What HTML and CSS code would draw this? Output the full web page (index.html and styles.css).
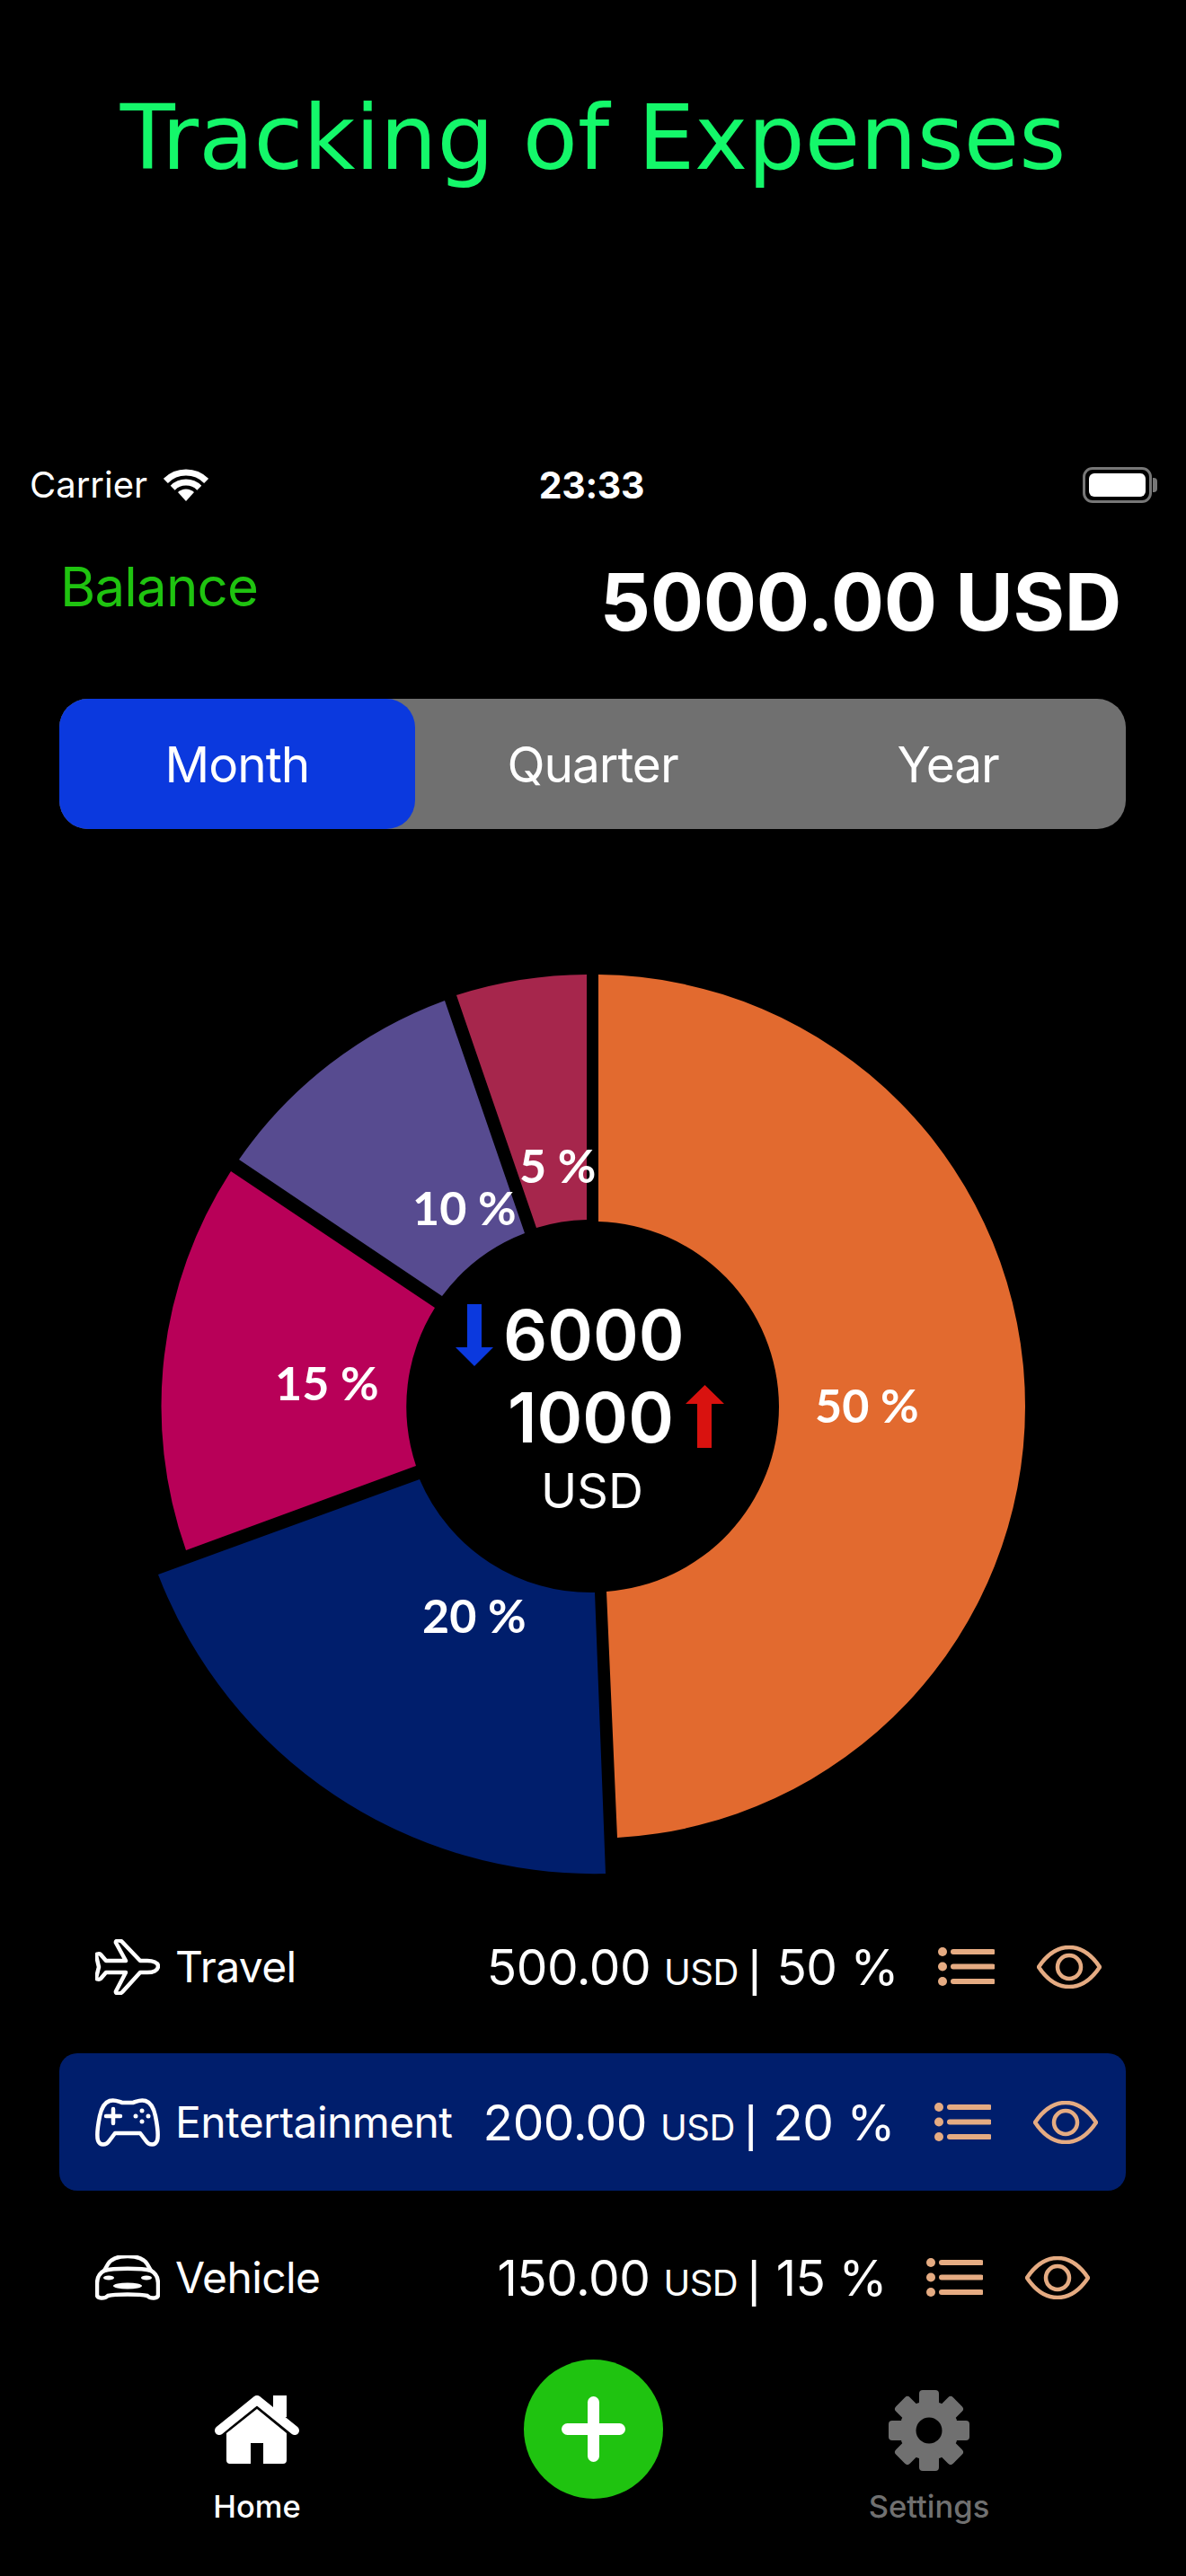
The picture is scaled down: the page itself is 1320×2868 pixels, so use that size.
FILE: index.html
```html
<!DOCTYPE html>
<html lang="en">
<head>
  <meta charset="UTF-8">
  <meta name="viewport" content="width=device-width, initial-scale=1.0">
  <title>Tracking of Expenses</title>
  <link rel="stylesheet" href="styles.css">
</head>
<body>
  <header class="title-area">
    <h1>Tracking of Expenses</h1>
  </header>

  <div class="status-bar">
    <div class="status-left">
      <span>Carrier</span>
      <svg class="wifi" viewBox="0 0 50 38">
        <path d="M2.4 14.4A32 32 0 0 1 47.6 14.4" fill="none" stroke="#fff" stroke-width="7"/>
        <path d="M10.2 22.2A21 21 0 0 1 39.8 22.2" fill="none" stroke="#fff" stroke-width="7"/>
        <path d="M25 37L16 27A13 13 0 0 1 34 27Z" fill="#fff"/>
      </svg>
    </div>
    <span class="status-time">23:33</span>
    <div class="status-right">
      <div class="battery"><div class="battery-level"></div></div>
    </div>
  </div>

  <div class="balance-row">
    <span class="balance-label">Balance</span>
    <span class="balance-value">5000.00 USD</span>
  </div>

  <div class="segments">
    <div class="segment active">Month</div>
    <div class="segment">Quarter</div>
    <div class="segment">Year</div>
  </div>

  <svg class="chart" viewBox="0 923 1320 1190">
    <!-- slices, in page coordinates -->
    <path fill="#e26a2f" d="M666 1085A481 481 0 0 1 1141 1566A481 481 0 0 1 687 2046L675 1772A207 207 0 0 0 867 1566A207 207 0 0 0 666 1360Z"/>
    <path fill="#001e6c" d="M674 2086A520 520 0 0 1 176 1753L467 1647A207 207 0 0 0 662 1773Z"/>
    <path fill="#b80058" d="M257 1304A481 481 0 0 0 207 1726L463 1632A207 207 0 0 1 484 1456Z"/>
    <path fill="#574b90" d="M266 1291A481 481 0 0 1 495 1114L584 1373A207 207 0 0 0 492 1443Z"/>
    <path fill="#a6264c" d="M508 1108A481 481 0 0 1 653 1085V1358A207 207 0 0 0 597 1367Z"/>

    <text class="pct" x="907" y="1584">50 %</text>
    <text class="pct" x="470" y="1818">20 %</text>
    <text class="pct" x="306" y="1559">15 %</text>
    <text class="pct" x="459" y="1364">10 %</text>
    <text class="pct" x="578" y="1317">5 %</text>

    <text class="total" x="560" y="1514">6000</text>
    <text class="total" x="565" y="1606">1000</text>
    <text class="total-unit" x="659" y="1679">USD</text>
    <path fill="#0b39de" d="M520 1452H536V1500H549L528 1521L507 1500H520Z"/>
    <path fill="#d9120f" d="M776 1612H792V1563H806L784.500 1542L763 1563H776Z"/>
  </svg>

  <ul class="rows">
    <li class="row row-travel">
      <svg class="cat-icon" viewBox="0 0 72 62">
        <path d="M70 30C70 26 64 24 58 24H50L30 3C28 1 22 1 23 4L34 24H12L6 17C5 16 1 16 1 18L4 31L1 43C1 45 5 45 6 44L12 37H34L23 58C22 61 28 61 30 59L50 37H58C64 37 70 35 70 30Z"/>
      </svg>
      <span class="cat-name">Travel</span>
      <span class="amount">500.00 <small>USD </small><span class="sep">|</span> 50 %</span>
      <svg class="list-icon" viewBox="0 0 63 43">
        <circle cx="5" cy="5" r="5"/><circle cx="5" cy="21.500" r="5"/><circle cx="5" cy="38" r="5"/>
        <path d="M17 5H61M17 21.500H61M17 38H61"/>
      </svg>
      <svg class="eye-icon" viewBox="0 0 72 48">
        <path d="M2 24C14 6 26 2 36 2C46 2 58 6 70 24C58 42 46 46 36 46C26 46 14 42 2 24Z"/>
        <circle cx="36" cy="24" r="13"/>
      </svg>
    </li>
    <li class="row row-entertainment selected">
      <svg class="cat-icon" viewBox="0 0 72 54">
        <path d="M16 3C22 1 26 4 30 5H42C46 4 50 1 56 3C62 5 65 10 67 20C69 30 71 40 69 47C67 53 60 53 56 47L50 39H22L16 47C12 53 5 53 3 47C1 40 3 30 5 20C7 10 10 5 16 3Z"/>
        <path d="M12 20H28M20 12V28"/>
        <circle class="dot" cx="45" cy="20" r="2.500"/><circle class="dot" cx="52" cy="14" r="2.500"/>
        <circle class="dot" cx="52" cy="26" r="2.500"/><circle class="dot" cx="59" cy="20" r="2.500"/>
      </svg>
      <span class="cat-name">Entertainment</span>
      <span class="amount">200.00 <small>USD </small><span class="sep">|</span> 20 %</span>
      <svg class="list-icon" viewBox="0 0 63 43">
        <circle cx="5" cy="5" r="5"/><circle cx="5" cy="21.500" r="5"/><circle cx="5" cy="38" r="5"/>
        <path d="M17 5H61M17 21.500H61M17 38H61"/>
      </svg>
      <svg class="eye-icon" viewBox="0 0 72 48">
        <path d="M2 24C14 6 26 2 36 2C46 2 58 6 70 24C58 42 46 46 36 46C26 46 14 42 2 24Z"/>
        <circle cx="36" cy="24" r="13"/>
      </svg>
    </li>
    <li class="row row-vehicle">
      <svg class="cat-icon" viewBox="0 0 72 50">
        <path d="M14 10C18 3 26 1 36 1C46 1 54 3 58 10L62 17C68 20 70 26 70 32V44C70 48 62 49 58 45C50 43 22 43 14 45C10 49 2 48 2 44V32C2 26 4 20 10 17Z"/>
        <path d="M10 17C20 14 52 14 62 17"/>
        <ellipse class="dot" cx="15" cy="25" rx="6" ry="2.500"/><ellipse class="dot" cx="57" cy="25" rx="6" ry="2.500"/>
        <ellipse class="dot" cx="36" cy="34" rx="16" ry="3.500"/>
      </svg>
      <span class="cat-name">Vehicle</span>
      <span class="amount">150.00 <small>USD </small><span class="sep">|</span> 15 %</span>
      <svg class="list-icon" viewBox="0 0 63 43">
        <circle cx="5" cy="5" r="5"/><circle cx="5" cy="21.500" r="5"/><circle cx="5" cy="38" r="5"/>
        <path d="M17 5H61M17 21.500H61M17 38H61"/>
      </svg>
      <svg class="eye-icon" viewBox="0 0 72 48">
        <path d="M2 24C14 6 26 2 36 2C46 2 58 6 70 24C58 42 46 46 36 46C26 46 14 42 2 24Z"/>
        <circle cx="36" cy="24" r="13"/>
      </svg>
    </li>
  </ul>

  <nav class="tab-bar">
    <div class="tab">
      <svg class="home-icon" viewBox="0 0 94 76">
        <path d="M65 0H80V24H65Z" fill="#fff"/>
        <path d="M5 39L47 5L89 39" fill="none" stroke="#fff" stroke-width="10" stroke-linecap="round" stroke-linejoin="round"/>
        <path d="M47 15L80 42V72Q80 76 76 76H54V53H40V76H17Q13 76 13 72V42Z" fill="#fff"/>
      </svg>
      <span>Home</span>
    </div>
    <div class="tab tab-add">
      <button class="add-button"><span class="plus-h"></span><span class="plus-v"></span></button>
    </div>
    <div class="tab tab-muted">
      <svg class="gear-icon" viewBox="-46 -45 92 90">
        <g fill="#707070">
          <circle r="33"/>
          <rect x="-11" y="-45" width="22" height="90" rx="4"/>
          <rect x="-11" y="-45" width="22" height="90" rx="4" transform="rotate(45)"/>
          <rect x="-11" y="-45" width="22" height="90" rx="4" transform="rotate(90)"/>
          <rect x="-11" y="-45" width="22" height="90" rx="4" transform="rotate(135)"/>
        </g>
        <circle r="14.500" fill="#000"/>
      </svg>
      <span>Settings</span>
    </div>
  </nav>
</body>
</html>
```

FILE: styles.css
```css
* {
  box-sizing: border-box;
}

body {
  margin: 0;
  height: 2868px;
  overflow: hidden;
  background-color: #000;
  color: #fff;
  font-family: Inter, "Liberation Sans", sans-serif;
}

.title-area {
  height: 510px;
  padding-top: 94px;
}

h1 {
  margin: 0;
  font-family: "DejaVu Sans", sans-serif;
  font-size: 100px;
  font-weight: 400;
  line-height: 120px;
  color: #14f76a;
  text-align: center;
}

/* status bar */
.status-bar {
  display: grid;
  grid-template-columns: 1fr auto 1fr;
  align-items: center;
  height: 55px;
  margin-top: 2px;
  margin-bottom: -2px;
  padding: 0 32px 0 33px;
  font-size: 40px;
}

.status-left {
  display: flex;
  align-items: center;
  gap: 18px;
}

.wifi {
  width: 50px;
  height: 38px;
}

.status-time {
  position: relative;
  left: -2px;
  font-size: 41px;
  font-weight: 700;
  letter-spacing: -0.3px;
}

.status-right {
  display: flex;
  justify-content: flex-end;
}

.battery {
  position: relative;
  width: 77px;
  height: 40px;
  margin-right: 6px;
  padding: 4px;
  border: 3px solid #777;
  border-radius: 11px;
}

.battery::after {
  content: "";
  position: absolute;
  top: 9px;
  right: -9px;
  width: 5px;
  height: 16px;
  border-radius: 0 4px 4px 0;
  background-color: #777;
}

.battery-level {
  height: 100%;
  border-radius: 6px;
  background-color: #fff;
}

/* balance */
.balance-row {
  display: flex;
  justify-content: space-between;
  align-items: flex-start;
  height: 213px;
  padding: 50px 72px 0 67px;
}

.balance-label {
  font-size: 60px;
  letter-spacing: -0.8px;
  line-height: 76px;
  color: #1fc310;
}

.balance-value {
  margin-top: 5px;
  font-size: 88px;
  font-weight: 700;
  letter-spacing: -0.3px;
  line-height: 100px;
}

/* period switch */
.segments {
  display: flex;
  height: 145px;
  margin: 0 67px 0 66px;
  border-radius: 32px;
  background-color: #707070;
}

.segment {
  display: flex;
  flex: 1;
  align-items: center;
  justify-content: center;
  border-radius: 32px;
  font-size: 55px;
  letter-spacing: -1px;
}

.segment.active {
  background-color: #0b39de;
}

/* chart */
.chart {
  display: block;
  width: 1320px;
  height: 1190px;
}

.pct {
  font-family: Lato, sans-serif;
  font-size: 52px;
  font-weight: 700;
  fill: #fff;
}

.total {
  font-size: 77px;
  font-weight: 600;
  fill: #fff;
}

.total-unit {
  font-size: 54px;
  text-anchor: middle;
  fill: #fff;
}

/* category rows */
.rows {
  display: flex;
  flex-direction: column;
  gap: 20px;
  margin: 0 67px 0 66px;
  padding: 0;
  list-style: none;
}

.row {
  display: flex;
  align-items: center;
  height: 153px;
  padding-left: 40px;
}

.row.selected {
  border-radius: 20px;
  background-color: #001e6c;
}

.row-travel {
  padding-right: 27px;
}

.row-entertainment {
  padding-right: 31px;
}

.row-vehicle {
  padding-right: 40px;
}

.cat-icon {
  flex: none;
  width: 72px;
  fill: none;
  stroke: #fff;
  stroke-width: 4.5;
  stroke-linejoin: round;
  stroke-linecap: round;
}

.cat-icon .dot {
  fill: #fff;
  stroke: none;
}

.cat-name {
  flex: 1;
  margin-left: 17px;
  font-size: 48px;
  letter-spacing: -0.6px;
}

.amount {
  font-size: 55px;
  letter-spacing: -0.5px;
  white-space: nowrap;
}

.amount small {
  font-size: 40px;
}

.sep {
  margin-right: 3px;
  font-family: "Liberation Sans", sans-serif;
}

.list-icon {
  flex: none;
  width: 63px;
  height: 43px;
  margin-left: 44px;
  fill: #e5ab82;
  stroke: #e5ab82;
  stroke-width: 0;
}

.list-icon path {
  stroke-width: 6;
  stroke-linecap: round;
}

.eye-icon {
  flex: none;
  width: 72px;
  height: 48px;
  margin-left: 47px;
  fill: none;
  stroke: #e5ab82;
  stroke-width: 4.5;
}

/* bottom bar */
.tab-bar {
  position: absolute;
  top: 2620px;
  left: 99px;
  display: flex;
}

.tab {
  display: flex;
  flex-direction: column;
  align-items: center;
  width: 374px;
  font-size: 34.500px;
  font-weight: 500;
  line-height: 40px;
}

.home-icon {
  width: 94px;
  height: 76px;
  margin-top: 47px;
  margin-bottom: 28px;
}

.tab-muted {
  color: #707070;
}

.gear-icon {
  width: 92px;
  height: 90px;
  margin-top: 41px;
  margin-bottom: 20px;
}

.add-button {
  position: relative;
  width: 155px;
  height: 155px;
  margin-top: 7px;
  padding: 0;
  border: 0;
  border-radius: 50%;
  background-color: #1fc310;
}

.plus-h,
.plus-v {
  position: absolute;
  border-radius: 7px;
  background-color: #fff;
}

.plus-h {
  top: 71px;
  left: 42px;
  width: 71px;
  height: 13px;
}

.plus-v {
  top: 41px;
  left: 71px;
  width: 13px;
  height: 73px;
}
```
